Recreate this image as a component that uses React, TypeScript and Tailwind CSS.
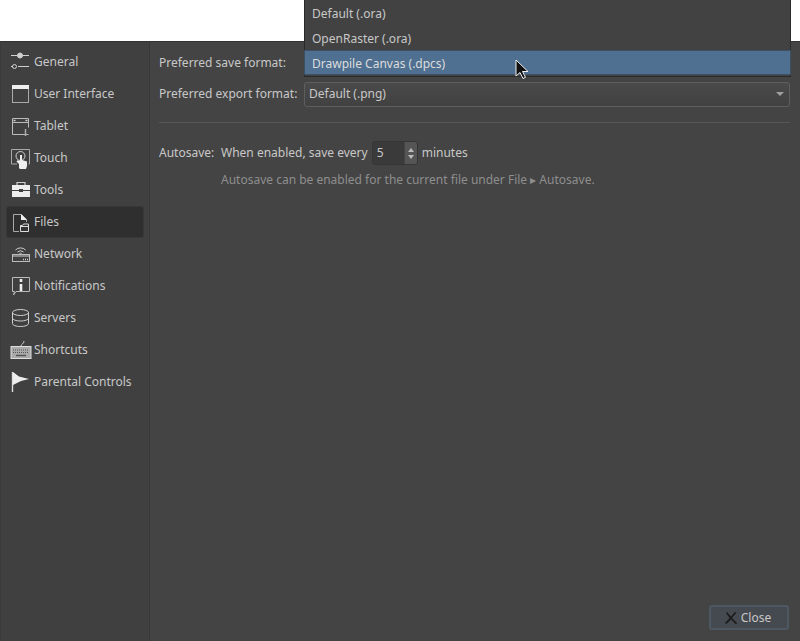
import React from "react";

const stroke = "#d0d0d0";
const S = ({ children }: { children: React.ReactNode }) => (
  <svg width="22" height="22" viewBox="0 0 22 22" fill="none" stroke={stroke} strokeWidth="1" className="shrink-0">
    {children}
  </svg>
);

const icons: Record<string, React.ReactNode> = {
  General: (
    <S>
      <path d="M1 4.5h18M1 15.5h2M8 15.5h11" />
      <circle cx="10" cy="4.5" r="2.5" fill={stroke} />
      <circle cx="4.5" cy="15.5" r="2" />
    </S>
  ),
  "User Interface": (
    <S>
      <rect x="2.5" y="2.5" width="16" height="17" stroke="#aaa" />
      <rect x="2" y="2" width="17" height="4" fill="#eee" stroke="none" />
    </S>
  ),
  Tablet: (
    <S>
      <path d="M18.5 19.5H2.5V3.5h16v9" stroke="#bbb" />
      <path d="M3 7.5h15" stroke="#bbb" />
      <path d="M3.5 5.5h2M15.5 5.5h2" strokeWidth="1.5" />
      <path d="M15.5 21v-7" strokeWidth="1.5" stroke="#aaa" />
    </S>
  ),
  Touch: (
    <S>
      <path d="M7 17H1.5V2.5h18V17h-1" stroke="#aaa" />
      <circle cx="10.5" cy="9" r="4.5" />
      <path d="M9 21v-4l-2.5-2.5 1-1.2L10 14V8h2v5l5 1.5V19l-1 3H10z" fill="#eee" stroke="none" />
    </S>
  ),
  Tools: (
    <S>
      <path d="M2 6h18v5h-7v-1H9v1H2zM2 12h7v1h4v-1h7v6H2z" fill="#eee" stroke="none" />
      <path d="M7 6V3.5h8V6" strokeWidth="1.2" />
    </S>
  ),
  Files: (
    <S>
      <path d="M9 20.5H3.5v-17h8l5 5V11" stroke="#aaa" />
      <path d="M11 3l6 6h-6z" fill="#eee" stroke="none" />
      <path d="M10.5 14.5h2l1-1.5h5v7.5h-8z" fill="#333" stroke="#ddd" />
      <path d="M11 15.5h7" stroke="#ddd" />
    </S>
  ),
  Network: (
    <S>
      <path d="M5.5 7a7 7 0 0 1 10 0M7.5 9a4.5 4.5 0 0 1 6 0M9.5 10.5a2 2 0 0 1 2 0" />
      <rect x="2.5" y="11.5" width="17" height="7" stroke="#bbb" />
      <path d="M2 13h18" />
      <path d="M13 16.5h5" strokeWidth="1.5" strokeDasharray="1 1" />
    </S>
  ),
  Notifications: (
    <S>
      <path d="M4.5 16.5H2.5V2.5h17v14H6L3.5 20z" stroke="#bbb" />
      <path d="M11 4v3M11 9v7" strokeWidth="2.6" stroke="#eee" />
    </S>
  ),
  Servers: (
    <S>
      <ellipse cx="10.5" cy="5.5" rx="8" ry="3" />
      <path d="M2.5 5.5v11c0 1.7 3.6 3 8 3s8-1.3 8-3v-11M2.5 11c0 1.7 3.6 3 8 3s8-1.3 8-3" />
    </S>
  ),
  Shortcuts: (
    <S>
      <path d="M11 7c0-2 3-2 3-5" />
      <rect x="1" y="7.5" width="20" height="12" fill="#aaa" stroke="#ddd" />
      <path d="M3 11h16M3 13.5h16" stroke="#555" strokeDasharray="1 1" />
      <path d="M6 16.5h10" stroke="#555" strokeWidth="1.5" />
    </S>
  ),
  "Parental Controls": (
    <S>
      <path d="M2.5 1v20" stroke="#ddd" strokeWidth="1.4" />
      <path d="M3 1l6 4.5 10 2.5-8 2-8 4z" fill="#eee" stroke="none" />
    </S>
  ),
};

const items = Object.keys(icons);

export default function App() {
  return (
    <div className="relative w-[800px] h-[641px] bg-white overflow-hidden font-['Noto_Sans',sans-serif] text-[12px] text-[#c8c8c8]">
      <div className="mt-[41px] h-[600px] flex bg-[#444444] border-t border-[#333] border-l border-l-[#3a3a3a]">
        <nav className="w-[149px] shrink-0 bg-[#404040] border-r border-[#383838] pt-[4px] pl-[5px] pr-[5px] flex flex-col">
          {items.map((name) => (
            <div
              key={name}
              className={`h-[32px] flex items-center gap-[2px] pl-[3px] rounded-[3px] border ${
                name === "Files" ? "bg-[#2f2f2f] border-[#383838]" : "border-transparent"
              }`}
            >
              {icons[name]}
              <span>{name}</span>
            </div>
          ))}
        </nav>
        <main className="flex-1 flex flex-col pl-[9px] pr-[10px] pt-[8px]">
          <div className="h-[26px] flex items-center">Preferred save format:</div>
          <div className="h-[26px] mt-[5px] flex items-center">
            <span className="w-[145px] shrink-0">Preferred export format:</span>
            <div className="flex-1 h-[25px] rounded-[3px] border border-[#5e5e5e] bg-gradient-to-b from-[#4a4a4a] to-[#414141] flex items-center justify-between pl-[4px] pr-[5px]">
              <span>Default (.png)</span>
              <span className="w-0 h-0 border-l-[4px] border-r-[4px] border-t-[4px] border-l-transparent border-r-transparent border-t-[#a0a0a0]" />
            </div>
          </div>
          <div className="mt-[15px] h-px bg-[#565656]" />
          <div className="mt-[17px] h-[26px] flex items-center">
            <span className="w-[62px] shrink-0">Autosave:</span>
            <span>When enabled, save every</span>
            <div className="ml-[4px] w-[46px] h-[24px] rounded-[3px] border border-[#363636] bg-[#3a3a3a] flex">
              <span className="flex-1 pl-[4px] leading-[22px]">5</span>
              <span className="w-[13px] bg-[#555] border-l border-[#444] rounded-r-[2px] flex flex-col items-center justify-center gap-[3px]">
                <span className="w-0 h-0 border-l-[3.5px] border-r-[3.5px] border-b-[4px] border-l-transparent border-r-transparent border-b-[#bbb]" />
                <span className="w-0 h-0 border-l-[3.5px] border-r-[3.5px] border-t-[4px] border-l-transparent border-r-transparent border-t-[#bbb]" />
              </span>
            </div>
            <span className="ml-[4px]">minutes</span>
          </div>
          <div className="mt-[1px] ml-[62px] h-[26px] flex items-center text-[#8e8e8e]">
            Autosave can be enabled for the current file under File ▸ Autosave.
          </div>
          <div className="mt-auto mb-[11px] flex justify-end">
            <button className="w-[80px] h-[25px] mr-[1px] rounded-[3px] border-2 border-[#4e5862] bg-[#454a50] flex items-center justify-center gap-[3px] pr-[3px] text-[#c8c8c8]">
              <svg width="14" height="14" viewBox="0 0 14 14" fill="#1c1c1c">
                <path d="M3 1l4 4.5L11 1l1.5.7L8 7l5 5-1 1.5L7 8.5 2.5 13 1 12l4.5-5L2 2z" />
              </svg>
              Close
            </button>
          </div>
        </main>
      </div>

      <div className="absolute left-[304px] top-0 w-[487px] h-[77px] bg-[#424242] border border-[#2b2b2b] border-t-0 flex flex-col">
        <div className="h-[25px] flex items-center pl-[7px] pt-[2px]">Default (.ora)</div>
        <div className="h-[25px] flex items-center pl-[7px] pt-[2px]">OpenRaster (.ora)</div>
        <div className="h-[25px] flex items-center pl-[7px] pt-[2px] bg-[#4f7091] border border-[#3d5166] -mx-px text-[#dcdcdc]">
          Drawpile Canvas (.dpcs)
        </div>
      </div>

      <svg className="absolute left-[515px] top-[59px]" width="14" height="21" viewBox="0 0 14 21">
        <path d="M1 1v16l4-3.5 3 6 2.5-1.2-3-5.8h5.5z" fill="#111" stroke="#eee" strokeWidth="1" />
      </svg>
    </div>
  );
}
